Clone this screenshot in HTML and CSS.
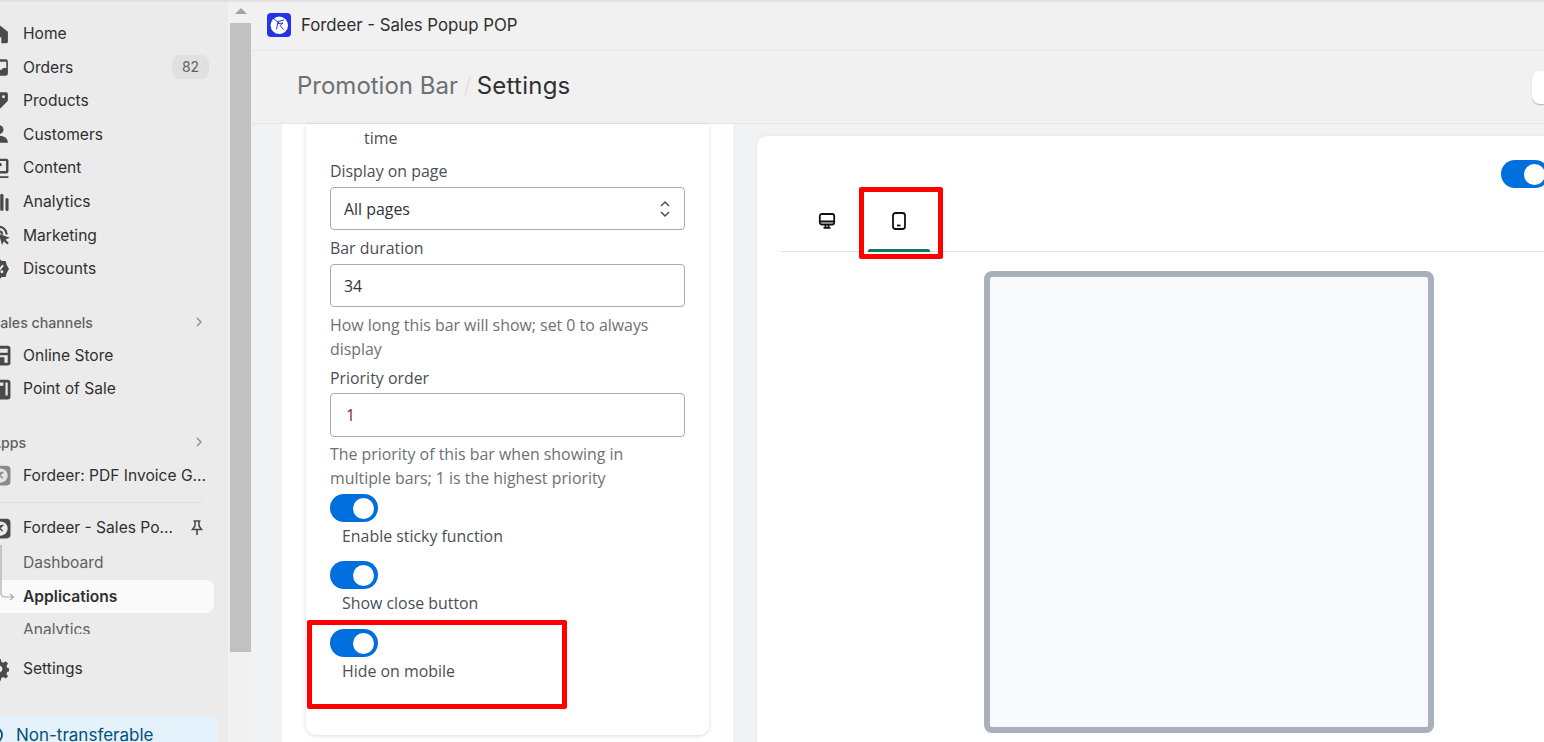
FILE: index.html
```html
<!DOCTYPE html>
<html lang="en">
<head>
    <meta charset="UTF-8">
    <meta name="viewport" content="width=device-width, initial-scale=1.0">
    <title>Promotion Bar Settings</title>
    <link rel="stylesheet" href="styles.css">
</head>
<body>

    <div class="app">
        <!-- sidebar, scrolled a little to the right so the icons are cut off -->
        <aside class="sidebar">
            <nav class="nav">
                <a class="nav-item"><svg class="icon" viewBox="0 0 20 20"><path d="M11 1.500 3 8v9a1.500 1.500 0 0 0 1.500 1.500H9V13h4v5.500h4.500A1.500 1.500 0 0 0 19 17V8z"/></svg>Home</a>
                <a class="nav-item"><svg class="icon" viewBox="0 0 20 20"><path fill-rule="evenodd" d="M4 3h13a2 2 0 0 1 2 2v11a2 2 0 0 1-2 2H4a2 2 0 0 1-2-2V5a2 2 0 0 1 2-2zm.500 2.200V11h5l1 1.500h3l1-1.500h3V5.200z"/></svg>Orders<span class="badge">82</span></a>
                <a class="nav-item"><svg class="icon" viewBox="0 0 20 20"><path fill-rule="evenodd" d="M12 2h5.500a1.500 1.500 0 0 1 1.500 1.500V9a2 2 0 0 1-.6 1.400l-7.500 7.600a2 2 0 0 1-2.800 0l-5-5a2 2 0 0 1 0-2.800l7.500-7.600A2 2 0 0 1 12 2zm3 2.800a1.300 1.300 0 1 0 0 2.600 1.300 1.300 0 0 0 0-2.600z"/></svg>Products</a>
                <a class="nav-item"><svg class="icon" viewBox="0 0 20 20"><circle cx="11" cy="6" r="4"/><path d="M3 18c0-4 3.200-6.500 8-6.500s8 2.500 8 6.500z"/></svg>Customers</a>
                <a class="nav-item"><svg class="icon" viewBox="0 0 20 20"><path fill-rule="evenodd" d="M4 1.500h13.500a2 2 0 0 1 2 2V13a2 2 0 0 1-2 2H4a2 2 0 0 1-2-2V3.500a2 2 0 0 1 2-2zm.300 2.200v9.100h13V3.700zM12 5.500a1.500 1.500 0 1 0 0 3 1.500 1.500 0 0 0 0-3zM3 17.500h6V19H3zm8 0h8.500V19H11z"/></svg>Content</a>
                <a class="nav-item"><svg class="icon" viewBox="0 0 20 20"><rect x="6.500" y="8" width="3.500" height="10.200" rx="1.500"/><rect x="12" y="2.500" width="3" height="15.700" rx="1.500"/><rect x="16.800" y="6.400" width="2.800" height="11.800" rx="1.400"/></svg>Analytics</a>
                <a class="nav-item"><svg class="icon icon-wide" viewBox="0 0 20 20"><path d="M9 1.500a8 8 0 0 1 8 8h-2a6 6 0 0 0-12 0 6 6 0 0 0 3 5.200l-1 1.700A8 8 0 0 1 9 1.500z"/><path d="M9 5.500a4 4 0 0 1 4 4h-2a2 2 0 1 0-3 1.700l-1 1.700A4 4 0 0 1 9 5.500z"/><path d="m9 9 10 3.500-4 1.700 3 3-1.500 1.500-3-3L11.800 19z"/></svg>Marketing</a>
                <a class="nav-item"><svg class="icon" viewBox="0 0 20 20"><path fill-rule="evenodd" d="m11 .5 2.500 2.200H17l.8 3.500 2.200 3.800-2.200 3.800-.8 3.500h-3.500L11 19.500l-2.500-2.200H5l-.8-3.500L2 10l2.200-3.800L5 2.700h3.500zm3 5.500-6 7 1.300 1.200 6-7zM9 6.200a1.300 1.300 0 1 0 0 2.600 1.300 1.300 0 0 0 0-2.600zm4.500 5a1.300 1.300 0 1 0 0 2.600 1.300 1.300 0 0 0 0-2.600z"/></svg>Discounts</a>

                <div class="nav-title">Sales channels
                    <svg class="chevron" viewBox="0 0 10 12"><path d="m3 2 4 4-4 4"/></svg>
                </div>
                <a class="nav-item"><svg class="icon icon-wide" viewBox="0 0 20 20"><path fill-rule="evenodd" d="M4 1.500h13A2.500 2.500 0 0 1 19.500 4v13a2.500 2.500 0 0 1-2.500 2.500H4A2.500 2.500 0 0 1 1.500 17V4A2.500 2.500 0 0 1 4 1.500zm0 2.800V8h13V4.300zm0 6V17h6v-5h4v5h3v-6.700z"/></svg>Online Store</a>
                <a class="nav-item"><svg class="icon icon-wide" viewBox="0 0 20 20"><path fill-rule="evenodd" d="M4 1.500h13A2.500 2.500 0 0 1 19.500 4v13a2.500 2.500 0 0 1-2.500 2.500H4A2.500 2.500 0 0 1 1.500 17V4A2.500 2.500 0 0 1 4 1.500zM4 4v3h9V4zm0 5v2h2V9zm4 0v2h2V9zm-4 4v3h2v-3zm4 0v3h2v-3zm7-9v12h2V4z"/></svg>Point of Sale</a>

                <div class="nav-title nav-title-apps">Apps
                    <svg class="chevron" viewBox="0 0 10 12"><path d="m3 2 4 4-4 4"/></svg>
                </div>
                <a class="nav-item"><svg class="icon icon-wide" viewBox="0 0 20 20"><rect x="1.500" y="1.500" width="18" height="18" rx="3.500" fill="#8a8a8a"/><circle cx="10.500" cy="10.500" r="6.500" fill="#e4e4e4"/><path d="m7 9 6-1.500-3.500 2.500 3 3" fill="none" stroke="#8a8a8a" stroke-width="1.200"/></svg>Fordeer: PDF Invoice G...</a>
                <div class="nav-divider"></div>
                <a class="nav-item"><svg class="icon icon-wide" viewBox="0 0 20 20"><rect x="1.500" y="1.500" width="18" height="18" rx="3.500" fill="#4a4a4a"/><circle cx="10.500" cy="10.500" r="6.500" fill="#ebebeb"/><path d="m7 9 6-1.500-3.500 2.500 3 3" fill="none" stroke="#4a4a4a" stroke-width="1.200"/></svg>Fordeer - Sales Po...
                    <svg class="pin" viewBox="0 0 16 18"><path d="M4.500 2h7M6 2v5L3.500 10.500h9L10 7V2M8 10.500V16"/></svg>
                </a>
                <div class="subnav">
                    <a class="sub-item">Dashboard</a>
                    <a class="sub-item sub-active">Applications</a>
                    <a class="sub-item">Analytics</a>
                    <svg class="connector" viewBox="0 0 18 56"><path d="M1 0v48a4 4 0 0 0 4 4h8M10 49l3.500 3-3.500 3"/></svg>
                </div>
                <a class="nav-item nav-settings"><svg class="icon" viewBox="0 0 20 20"><path fill-rule="evenodd" d="M9.500 1.500h3l.5 2.500 1.800.8L17 3.400l2.100 2.100-1.400 2.200.8 1.800 1.500.3v3l-1.500.3-.8 1.800 1.400 2.200-2.100 2.100-2.200-1.400-1.800.8-.5 2.500h-3L9 18l-1.800-.8L5 18.600l-2.100-2.100 1.400-2.200-.8-1.800L1 12V9l2.500-.5.800-1.800-1.400-2.200L5 2.400l2.200 1.400L9 4zM11 7.500a3 3 0 1 0 0 6 3 3 0 0 0 0-6z" transform="translate(0 -.5)"/></svg>Settings</a>
            </nav>
            <div class="plan-note">
                <svg class="plan-icon" viewBox="0 0 20 20"><circle cx="10" cy="10" r="8"/></svg>
                Non-transferable
            </div>
        </aside>

        <div class="scrollbar">
            <span class="scroll-arrow"></span>
            <div class="scroll-thumb"></div>
        </div>

        <main class="main">
            <div class="topbar">
                <svg class="logo" viewBox="0 0 24 24">
                    <rect width="24" height="24" rx="4" fill="#2333e6"/>
                    <circle cx="12.300" cy="12.300" r="8.700" fill="#fff"/>
                    <path d="M5 4l8 7M17 7l-6 1.500-1.500 8M11 10.500l5-.5-3 2.500 3.500 4" fill="none" stroke="#2333e6" stroke-width="1"/>
                </svg>
                <span class="app-name">Fordeer - Sales Popup POP</span>
            </div>
            <header class="page-header">
                <h1><span class="crumb">Promotion Bar</span><span class="crumb-sep">/</span><span class="crumb-now">Settings</span></h1>
                <div class="header-btn"></div>
            </header>

            <div class="content">
                <section class="form-wrap">
                    <div class="form-card">
                        <p class="cut-text">time</p>

                        <label class="field-label label-first">Display on page</label>
                        <div class="select">
                            <span>All pages</span>
                            <svg viewBox="0 0 12 20"><path d="m2 7 4-4 4 4M2 13l4 4 4-4"/></svg>
                        </div>

                        <label class="field-label" for="duration">Bar duration</label>
                        <input class="text-input" id="duration" type="text" value="34">
                        <p class="help">How long this bar will show; set 0 to always<br>display</p>

                        <label class="field-label" for="priority">Priority order</label>
                        <input class="text-input input-priority" id="priority" type="text" value="1">
                        <p class="help">The priority of this bar when showing in<br>multiple bars; 1 is the highest priority</p>

                        <div class="switch-row first-switch">
                            <span class="toggle"><span class="knob"></span></span>
                            <span class="switch-label">Enable sticky function</span>
                        </div>
                        <div class="switch-row">
                            <span class="toggle"><span class="knob"></span></span>
                            <span class="switch-label">Show close button</span>
                        </div>
                        <div class="switch-row hide-mobile">
                            <span class="toggle"><span class="knob"></span></span>
                            <span class="switch-label">Hide on mobile</span>
                            <div class="red-box box-mobile"></div>
                        </div>
                    </div>
                </section>

                <section class="preview-card">
                    <div class="preview-top">
                        <span class="toggle"><span class="knob"></span></span>
                    </div>
                    <div class="tabs">
                        <div class="tab">
                            <svg viewBox="0 0 18 18"><rect x="1.800" y="2" width="14.400" height="10.500" rx="2"/><path d="M2 9.500h14M7.500 12.500v3M10.500 12.500v3M5.500 15.800h7"/></svg>
                        </div>
                        <div class="tab tab-active">
                            <svg viewBox="0 0 18 18"><rect x="3" y="1" width="12" height="16" rx="2.500"/><path d="M7 13.500h3.500"/></svg>
                            <div class="red-box box-tab"></div>
                        </div>
                    </div>
                    <div class="preview-frame"></div>
                </section>
            </div>
        </main>
    </div>

</body>
</html>
```

FILE: styles.css
```css
* {
    box-sizing: border-box;
}
html, body {
    margin: 0;
    height: 742px;
    overflow: hidden;
}
body {
    font-family: Inter, "Liberation Sans", sans-serif;
    font-size: 16px;
    color: #303030;
    background-color: #f1f2f4;
}
.app {
    display: flex;
    height: 742px;
    position: relative;
}
.app::before {
    content: "";
    position: absolute;
    top: 0;
    left: 0;
    right: 0;
    height: 3px;
    background: linear-gradient(#dcdcdc, rgba(220,220,220,0));
    z-index: 5;
}

/* sidebar */
.sidebar {
    width: 228px;
    flex-shrink: 0;
    background-color: #ebebeb;
    overflow: hidden;
    padding-top: 16.8px;
}
.nav {
    margin-left: -12px;
    width: 226px;
    font-size: 15.6px;
}
.nav-item {
    display: flex;
    align-items: center;
    height: 33.6px;
    color: #303030;
    white-space: nowrap;
}
.icon {
    width: 22px;
    height: 22px;
    margin-left: -1px;
    margin-right: 14px;
    flex-shrink: 0;
    fill: #4a4a4a;
    overflow: visible;
}
.icon-wide {
    transform: translateX(2px);
}
.badge {
    margin-left: auto;
    width: 37px;
    height: 24px;
    line-height: 24px;
    text-align: center;
    font-size: 14px;
    color: #616161;
    background-color: #e0e0e0;
    border-radius: 8px;
    margin-right: 5px;
}
.nav-title {
    display: flex;
    align-items: center;
    height: 31.8px;
    margin-top: 21px;
    padding-left: 3px;
    font-size: 14.2px;
    font-weight: 500;
    color: #616161;
}
.nav-title-apps {
    height: 33px;
    margin-top: 20px;
}
.chevron {
    width: 10px;
    height: 12px;
    margin-left: auto;
    margin-right: 10px;
    fill: none;
    stroke: #8a8a8a;
    stroke-width: 1.300;
}
.nav-divider {
    height: 1px;
    margin: 10px 11px 8px 12px;
    background-color: #e0e0e0;
}
.pin {
    width: 16px;
    height: 18px;
    margin-left: auto;
    margin-right: 9px;
    fill: none;
    stroke: #4a4a4a;
    stroke-width: 1.600;
}
.subnav {
    position: relative;
    height: 89px;
    padding-top: 0.5px;
    overflow: hidden;
}
.sub-item {
    display: flex;
    align-items: center;
    height: 33.6px;
    padding-left: 35px;
    color: #616161;
}
.sub-active {
    height: 33px;
    margin-top: 1px;
    color: #303030;
    font-weight: 600;
    background-color: #fafafa;
    border-radius: 8px;
}
.connector {
    position: absolute;
    left: 12px;
    top: 0;
    width: 18px;
    height: 56px;
    fill: none;
    stroke: #aaaaaa;
    stroke-width: 1.200;
}
.nav-settings {
    margin-top: 18px;
}
.plan-note {
    display: flex;
    align-items: center;
    width: 218px;
    height: 60px;
    margin-top: 30px;
    padding: 0 0 20px 16px;
    position: relative;
    font-size: 17px;
    color: #00527c;
    background-color: #e5f1fb;
    border-radius: 0 8px 8px 0;
    white-space: nowrap;
}
.plan-icon {
    position: absolute;
    left: -16px;
    top: 10px;
    width: 20px;
    height: 20px;
    fill: none;
    stroke: #00527c;
    stroke-width: 1.800;
}

/* page scrollbar */
.scrollbar {
    width: 24px;
    flex-shrink: 0;
    background-color: #f1f1f1;
    padding: 8px 1px 0 2px;
}
.scroll-arrow {
    display: block;
    width: 0;
    height: 0;
    margin: 0 auto 9px;
    border-left: 6px solid transparent;
    border-right: 6px solid transparent;
    border-bottom: 6px solid #a3a3a3;
}
.scroll-thumb {
    height: 629px;
    background-color: #c1c1c1;
}

/* main */
.main {
    flex: 1;
    min-width: 0;
    overflow: hidden;
}
.topbar {
    display: flex;
    align-items: center;
    gap: 10px;
    height: 51px;
    padding-left: 15px;
    padding-bottom: 1px;
    background-color: #f1f1f1;
    border-bottom: 1px solid #e8e8e8;
}
.app-name {
    font-size: 16.8px;
}
.logo {
    width: 24px;
    height: 24px;
}
.page-header {
    display: flex;
    align-items: center;
    justify-content: space-between;
    height: 73px;
    padding-left: 45px;
    background-color: #f1f1f1;
    border-bottom: 1px solid #e6e6e6;
}
h1 {
    margin: 0 0 4px;
    font-size: 24px;
    font-weight: 400;
    color: #303030;
}
.crumb {
    color: #6d7175;
}
.crumb-sep {
    margin: 0 5px;
    color: #e4e4e4;
}
.crumb-now {
    letter-spacing: 0.25px;
}
.header-btn {
    width: 30px;
    height: 33px;
    margin-right: -18px;
    background-color: #fff;
    border-radius: 8px;
    box-shadow: 0 1px 1px rgba(0,0,0,0.25);
}
.content {
    display: flex;
    align-items: flex-start;
    gap: 24px;
    padding-left: 30px;
}

/* left form */
.form-wrap {
    width: 451px;
    flex-shrink: 0;
    height: 618px;
    padding: 0 24px;
    background-color: #fff;
}
.form-card {
    padding: 2px 24px 0;
    height: 611px;
    background-color: #fff;
    border-radius: 0 0 10px 10px;
    box-shadow: 0 1px 4px rgba(0,0,0,0.15);
    font-family: "Open Sans", "Liberation Sans", sans-serif;
    font-size: 15.9px;
    line-height: 24px;
    color: #4a4f55;
}
.cut-text {
    margin: 0;
    padding-left: 34px;
}
.field-label {
    display: block;
    margin-top: 6px;
    margin-bottom: 4px;
}
.label-first {
    margin-top: 9px;
    margin-bottom: 4px;
}
.select, .text-input {
    display: flex;
    align-items: center;
    justify-content: space-between;
    width: 100%;
    height: 43px;
    padding: 0 13px;
    font: inherit;
    color: #303338;
    background-color: #fff;
    border: 1px solid #a8abb5;
    border-radius: 4px;
}
.select svg {
    width: 12px;
    height: 20px;
    fill: none;
    stroke: #4a4f55;
    stroke-width: 1.500;
}
.input-priority {
    height: 44px;
    padding-left: 15px;
    color: #7a1f2b;
}
.help {
    margin: 6px 0 0;
    color: #6d7175;
}
.help + .field-label {
    margin-top: 5px;
    margin-bottom: 3px;
}
.input-priority + .help {
    margin-top: 5px;
}
.switch-row {
    position: relative;
    margin-top: 13px;
}
.first-switch {
    margin-top: 4px;
}
.hide-mobile {
    margin-top: 14px;
}
.toggle {
    display: flex;
    align-items: center;
    justify-content: flex-end;
    width: 48px;
    height: 28px;
    padding-right: 4px;
    background-color: #006fde;
    border-radius: 14px;
}
.knob {
    width: 21px;
    height: 21px;
    background-color: #fff;
    border-radius: 50%;
}
.switch-label {
    display: block;
    margin-top: 2px;
    padding-left: 12px;
}

/* annotations on top of the screenshot */
.red-box {
    position: absolute;
    border: 5px solid #ff0000;
    border-radius: 2px;
    pointer-events: none;
}
.box-mobile {
    left: -23px;
    top: -9px;
    width: 260px;
    height: 89px;
}
.box-tab {
    left: -4px;
    top: -4px;
    width: 84px;
    height: 72px;
}

/* right preview */
.preview-card {
    width: 904px;
    flex-shrink: 0;
    height: 640px;
    margin-top: 12px;
    padding: 24px;
    background-color: #fff;
    border-radius: 10px;
    box-shadow: 0 0 4px rgba(0,0,0,0.06);
}
.preview-top {
    display: flex;
    justify-content: flex-end;
    padding-right: 88px;
    height: 31px;
}
.tabs {
    display: flex;
    height: 61px;
    padding-left: 10px;
    border-bottom: 1px solid #e1e3e5;
}
.tab {
    position: relative;
    display: flex;
    align-items: center;
    justify-content: center;
    width: 72px;
    height: 60px;
}
.tab svg {
    width: 18px;
    height: 18px;
    fill: none;
    stroke: #111;
    stroke-width: 1.800;
}
.tab-active::after {
    content: "";
    position: absolute;
    left: 5px;
    right: 5px;
    bottom: -1px;
    height: 3px;
    background-color: #0f7a5d;
    border-radius: 2px 2px 0 0;
}
.preview-frame {
    width: 450px;
    height: 462px;
    margin: 19px auto 0;
    background-color: #f8f9fb;
    border: 6px solid #aab0bb;
    border-radius: 8px;
}
```
